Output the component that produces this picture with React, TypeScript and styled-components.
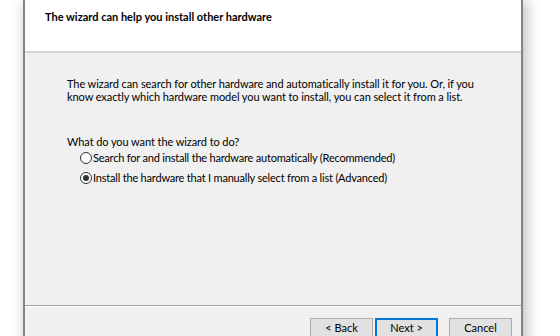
import React from "react";
import styled, { createGlobalStyle } from "styled-components";

const Global = createGlobalStyle`
  html, body { margin: 0; padding: 0; background: #ffffff; overflow: hidden; }
  body { width: 560px; height: 336px; font-family: Lato, "Segoe UI", sans-serif; }
`;

const Stage = styled.div`
  display: flex;
  padding-left: 23px;
  height: 336px;
  overflow: hidden;
`;

const Window = styled.div`
  width: 496px;
  height: 351px;
  display: flex;
  flex-direction: column;
  border-left: 2px solid #858585;
  border-right: 2px solid #858585;
  background: #f0f0f0;
  box-shadow: 3px 0 14px rgba(0, 0, 0, 0.28);
  font-size: 11px;
  color: #000;
`;

const Header = styled.div`
  height: 53px;
  background: #ffffff;
  border-bottom: 2px solid #d5d5d5;
  padding: 9px 0 0 20px;
  box-sizing: border-box;
  flex: none;
`;

const Title = styled.div`
  font-weight: 700;
  line-height: 15px;
`;

const Content = styled.div`
  flex: 1;
  padding: 24px 0 0 42px;
  display: flex;
  flex-direction: column;
  white-space: nowrap;
  letter-spacing: -0.08px;
`;

const Paragraph = styled.p`
  margin: 0;
  line-height: 13px;
`;

const Question = styled.div`
  margin-top: 32px;
  line-height: 13px;
`;

const Options = styled.div`
  display: flex;
  flex-direction: column;
  gap: 7px;
  margin-top: 3px;
  padding-left: 13px;
  letter-spacing: -0.2px;
`;

const Option = styled.label`
  display: flex;
  align-items: center;
  gap: 0;
  line-height: 13px;
`;

const Radio = styled.span<{ $checked?: boolean }>`
  width: 10px;
  height: 10px;
  margin-right: 1px;
  border: 1px solid #333333;
  border-radius: 50%;
  background: #ffffff;
  display: flex;
  align-items: center;
  justify-content: center;
  flex: none;
  &::after {
    content: "";
    display: ${(p) => (p.$checked ? "block" : "none")};
    width: 6px;
    height: 6px;
    border-radius: 50%;
    background: #333333;
  }
`;

const Footer = styled.div`
  flex: none;
  height: 46px;
  border-top: 1px solid #a0a0a0;
  box-shadow: inset 0 1px 0 #ffffff;
  display: flex;
  justify-content: flex-end;
  align-items: flex-start;
  padding: 12px 9px 0 0;
  box-sizing: border-box;
`;

const Button = styled.button<{ $default?: boolean; $gapLeft?: number }>`
  width: 63px;
  height: 23px;
  margin-left: ${(p) => p.$gapLeft ?? 0}px;
  font-family: inherit;
  font-size: 11px;
  color: #000;
  background: #e1e1e1;
  border: 1px solid ${(p) => (p.$default ? "#0078d7" : "#adadad")};
  box-shadow: ${(p) => (p.$default ? "inset 0 0 0 1px #0078d7" : "none")};
  padding: 0 0 5px;
  line-height: 15px;
`;

export default function App() {
  return (
    <>
      <Global />
      <Stage>
        <Window>
          <Header>
            <Title>The wizard can help you install other hardware</Title>
          </Header>
          <Content>
            <Paragraph>
              The wizard can search for other hardware and automatically install it for you. Or, if you
              <br />
              know exactly which hardware model you want to install, you can select it from a list.
            </Paragraph>
            <Question>What do you want the wizard to do?</Question>
            <Options>
              <Option>
                <Radio />
                Search for and install the hardware automatically (Recommended)
              </Option>
              <Option>
                <Radio $checked />
                Install the hardware that I manually select from a list (Advanced)
              </Option>
            </Options>
          </Content>
          <Footer>
            <Button>&lt; Back</Button>
            <Button $default $gapLeft={2}>Next &gt;</Button>
            <Button $gapLeft={11}>Cancel</Button>
          </Footer>
        </Window>
      </Stage>
    </>
  );
}
